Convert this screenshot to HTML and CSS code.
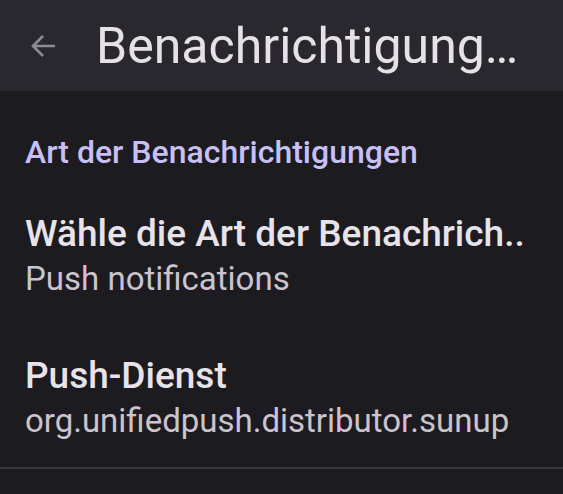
FILE: index.html
```html
<!DOCTYPE html>
<html lang="de">
<head>
<meta charset="utf-8">
<link rel="stylesheet" href="styles.css">
</head>
<body>
<header class="appbar">
  <svg class="back" width="26" height="24" viewBox="0 0 26 24"><path d="M25 12H3M13 2L3 12l10 10" fill="none" stroke="currentColor" stroke-width="2.6"/></svg>
  <h1 class="title">Benachrichtigung…</h1>
</header>
<main class="content">
  <div class="section-title">Art der Benachrichtigungen</div>
  <div class="pref">
    <div class="pref-title">Wähle die Art der Benachrich..</div>
    <div class="pref-sub">Push notifications</div>
  </div>
  <div class="pref">
    <div class="pref-title">Push-Dienst</div>
    <div class="pref-sub">org.unifiedpush.distributor.sunup</div>
  </div>
  <div class="divider"></div>
</main>
</body>
</html>
```
FILE: styles.css
```css
html, body {
  margin: 0;
  padding: 0;
  background: #1c1b1f;
  font-family: Roboto, "Noto Sans", sans-serif;
}
.appbar {
  height: 91px;
  background: #29282f;
  display: flex;
  align-items: center;
  padding-left: 30px;
}
.back {
  color: #8d8b93;
  flex: none;
}
.title {
  margin: 0 0 0 40px;
  font-size: 50px;
  font-weight: 400;
  color: #e6e1e6;
  white-space: nowrap;
}
.content {
  padding-top: 41px;
}
.section-title {
  padding-left: 25px;
  font-size: 32px;
  font-weight: 500;
  color: #c7bff7;
  line-height: 40px;
  margin-bottom: 12px;
}
.pref {
  padding: 27px 25px 25px;
}
.pref-title {
  font-size: 37px;
  font-weight: 500;
  color: #e8e3ea;
  line-height: 46px;
  white-space: nowrap;
}
.pref-sub {
  font-size: 33px;
  color: #c9c4ce;
  line-height: 44px;
  white-space: nowrap;
}
.divider {
  margin-top: -1px;
  height: 2px;
  background: #38373c;
}
```
